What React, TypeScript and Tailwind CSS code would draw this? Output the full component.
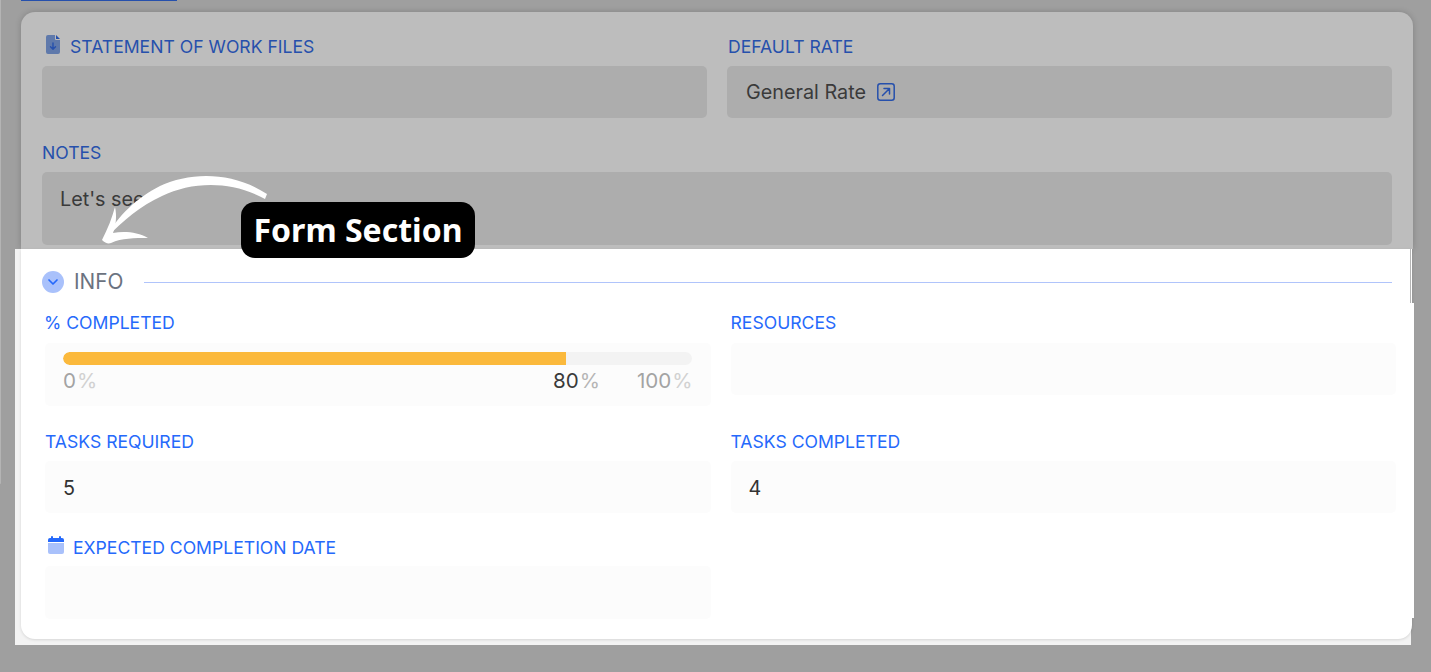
import React from "react";

const font = { fontFamily: "Inter, 'Liberation Sans', sans-serif" };

function Label({ children, dim, icon }: { children: React.ReactNode; dim?: boolean; icon?: React.ReactNode }) {
  return (
    <div className={`flex items-center h-[20px] text-[17.6px] leading-[20px] ${dim ? "text-[#2650ac]" : "text-[#2569fb] pt-[2px]"}`}>
      {icon}
      <span>{children}</span>
    </div>
  );
}

function Field({ children, className = "" }: { children?: React.ReactNode; className?: string }) {
  return <div className={`rounded-[5px] bg-[#fcfcfc] ${className}`}>{children}</div>;
}

function DimField({ children, className = "" }: { children?: React.ReactNode; className?: string }) {
  return <div className={`rounded-[5px] bg-[#adadad] flex items-center pr-[18px] text-[19.8px] text-[#3a3a3a] ${className}`}>{children}</div>;
}

export default function App() {
  return (
    <div style={font} className="relative w-[1431px] h-[672px] overflow-hidden bg-[#9f9f9f]">
      {/* left neighbour panel edge */}
      <div className="absolute left-0 top-0 w-[1px] h-[484px] rounded-br-[2px] bg-[#b4b4b4]" />
      {/* active tab underline */}
      <div className="ml-[21px] w-[156px] h-[1px] bg-[#2650ac]" />

      {/* dimmed form card */}
      <div className="ml-[21px] mt-[11px] w-[1392px] h-[237px] rounded-t-[14px] bg-[#bdbdbd] shadow-[0_0_6px_rgba(0,0,0,0.18)] px-[21px] pt-[25px]">
        <div className="grid grid-cols-2 gap-x-[20px]">
          <div>
            <Label
              dim
              icon={
                <svg width="14" height="19" viewBox="0 0 14 19" className="mr-[13px] ml-[4px] -mt-[6px] shrink-0">
                  <path d="M2 0h7v4a1 1 0 0 0 1 1h4v12a2 2 0 0 1-2 2H2a2 2 0 0 1-2-2V2a2 2 0 0 1 2-2z" fill="#5f79ab" />
                  <path d="M10 0l4 4h-4z" fill="#2650ac" />
                  <path d="M7 8v6M4.5 11.8 7 14.3l2.5-2.5" fill="none" stroke="#2650ac" strokeWidth="1.4" strokeLinecap="round" strokeLinejoin="round" />
                </svg>
              }
            >
              <span className="-ml-[3px]">STATEMENT OF WORK FILES</span>
            </Label>
            <DimField className="mt-[9px] h-[52px] pl-[19px]" />
          </div>
          <div>
            <Label dim>
              <span className="ml-[1px]">DEFAULT RATE</span>
            </Label>
            <DimField className="mt-[9px] h-[52px] pl-[19px] pt-[2px]">
              <span>General Rate</span>
              <svg width="18" height="18" viewBox="0 0 18 18" className="ml-[11px] -mt-[2px] shrink-0">
                <rect x="0.8" y="0.8" width="16.4" height="16.4" rx="2.5" fill="none" stroke="#2650ac" strokeWidth="1.5" />
                <path d="M5.5 12.5 12 6M7 5.5h5.5V11" fill="none" stroke="#2650ac" strokeWidth="1.5" strokeLinecap="round" strokeLinejoin="round" />
              </svg>
            </DimField>
          </div>
        </div>
        <div className="mt-[25px]">
          <Label dim>NOTES</Label>
          <DimField className="mt-[9px] h-[73px] !items-start pl-[18px] pt-[16px] leading-[23px]">Let's see</DimField>
        </div>
      </div>

      {/* highlighted section */}
      <div className="relative ml-[15px] w-[1396px] h-[396px] bg-[#f3f3f3]">
        <div className="absolute left-[1396px] top-[54px] w-[3px] h-[315px] bg-white" />
        <div className="absolute right-0 top-0 h-[54px] w-[1px] bg-[#b5b5b5]" />
        <div className="ml-[6px] w-[1391px] h-[390px] rounded-b-[14px] bg-white shadow-[0_1px_3px_rgba(0,0,0,0.12)] pl-[21px] pr-[20px] pt-[22px]">
          <div className="flex items-center h-[22px]">
            <span className="flex items-center justify-center w-[22px] h-[22px] rounded-full bg-[#a9c1fb]">
              <svg width="12" height="8" viewBox="0 0 12 8">
                <path d="M2 2l4 4 4-4" fill="none" stroke="#2569fb" strokeWidth="1.7" strokeLinecap="round" strokeLinejoin="round" />
              </svg>
            </span>
            <span className="ml-[10px] text-[20.8px] leading-[22px] text-[#6b7280]">INFO</span>
            <div className="ml-[21px] flex-1 h-[1px] bg-[#b0c4fb]" />
          </div>

          <div className="pl-[3px] -mr-[4px] mt-[19px] grid grid-cols-2 gap-x-[20px]">
            <div>
              <Label>
                <span className="-ml-[1px]">% COMPLETED</span>
              </Label>
              <Field className="mt-[11px] h-[63px] pl-[18px] pr-[19px] pt-[9px]">
                <div className="h-[13px] rounded-full bg-[#f3f3f3] overflow-hidden">
                  <div className="h-full w-[80%] rounded-l-full bg-[#fbb93c]" />
                </div>
                <div className="relative mt-[4px] h-[24px] text-[20.6px] leading-[24px]">
                  <span className="text-[#a3a3a3]">0<span className="ml-[1px] text-[#d1d1d1]">%</span></span>
                  <span className="absolute left-[490px] text-[#3a3a3a]">80<span className="ml-[1px] text-[#b5b5b5]">%</span></span>
                  <span className="absolute -right-[1px] text-[#a3a3a3]">100<span className="ml-[1px] text-[#d1d1d1]">%</span></span>
                </div>
              </Field>
            </div>
            <div>
              <Label>RESOURCES</Label>
              <Field className="mt-[11px] h-[52px]" />
            </div>
          </div>

          <div className="pl-[3px] -mr-[4px] mt-[25px] grid grid-cols-2 gap-x-[20px]">
            <div>
              <Label>TASKS REQUIRED</Label>
              <Field className="mt-[10px] h-[52px] flex items-center px-[18px] pt-[4px] text-[19.8px] text-[#333333]">5</Field>
            </div>
            <div>
              <Label>TASKS COMPLETED</Label>
              <Field className="mt-[10px] h-[52px] flex items-center px-[18px] pt-[4px] text-[19.8px] text-[#333333]">4</Field>
            </div>
          </div>

          <div className="pl-[3px] -mr-[4px] mt-[24px] grid grid-cols-2 gap-x-[20px]">
            <div>
              <Label
                icon={
                  <svg width="16" height="18" viewBox="0 0 16 18" className="ml-[3px] mr-[9px] -mt-[6px] shrink-0">
                    <path d="M0 7h16v9a2 2 0 0 1-2 2H2a2 2 0 0 1-2-2z" fill="#a9c1fb" />
                    <path d="M2 2h1V1a1 1 0 0 1 2 0v1h6V1a1 1 0 0 1 2 0v1h1a2 2 0 0 1 2 2v2H0V4a2 2 0 0 1 2-2z" fill="#2569fb" />
                  </svg>
                }
              >
                EXPECTED COMPLETION DATE
              </Label>
              <Field className="mt-[9px] h-[53px]" />
            </div>
            <div />
          </div>
        </div>
      </div>

      {/* annotation */}
      <svg width="180" height="80" viewBox="0 0 180 80" className="absolute left-[100px] top-[170px]">
        <path d="M167 24C132 1 90 2 60 16 38 27 17 46 6 68 24 50 40 36 62 26 92 12 130 10 165 29z" fill="#ffffff" />
        <path d="M15 37C12 48 8 58 2 70 5 73 8 74 11 73 22 68 34 68 48 68 38 62 24 61 13 63 16 55 17 46 15 37z" fill="#ffffff" />
      </svg>
      <div className="absolute left-[241px] top-[202px] w-[234px] h-[56px] rounded-[14px] bg-black flex items-center justify-center text-white text-[32px] font-bold" style={{ fontFamily: "'Noto Sans', sans-serif" }}>
        Form Section
      </div>
    </div>
  );
}
